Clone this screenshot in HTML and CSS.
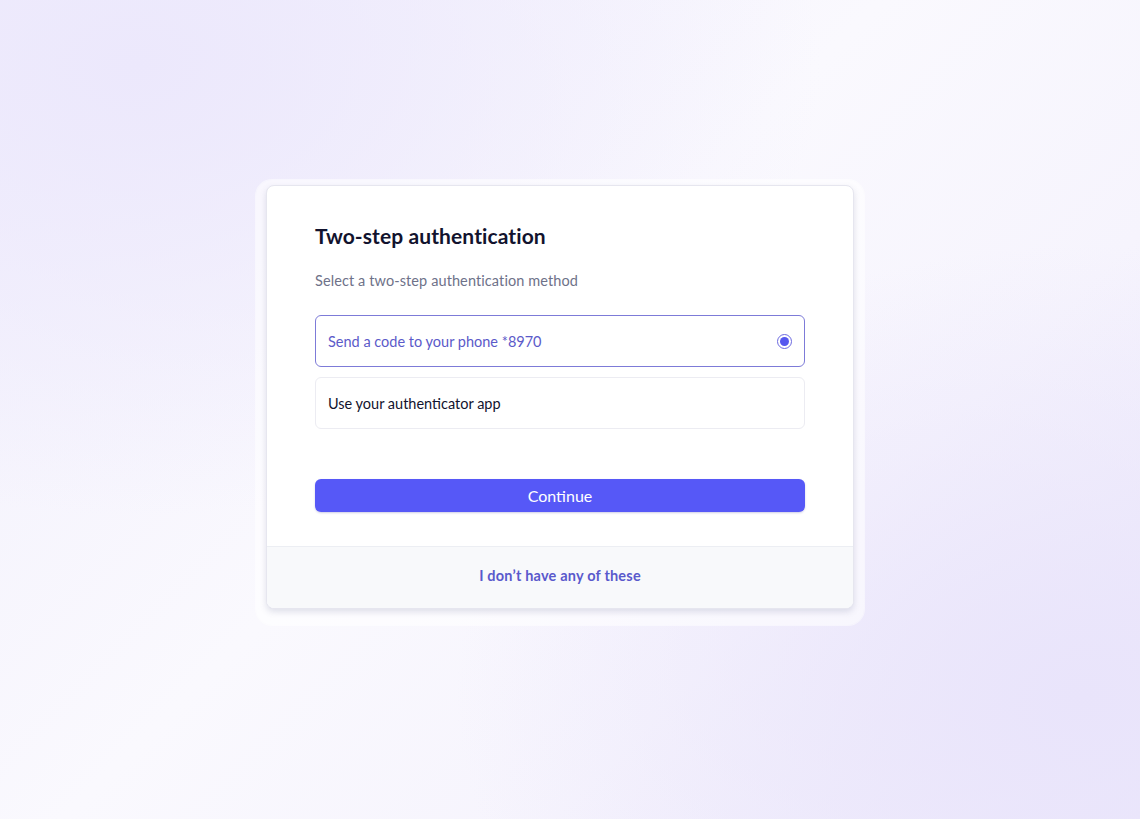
FILE: index.html
```html
<!DOCTYPE html>
<html lang="en">
<head>
<meta charset="utf-8">
<title>Two-step authentication</title>
<link rel="stylesheet" href="styles.css">
</head>
<body>
<main class="page">
  <div class="halo">
    <section class="card">
      <div class="card-body">
        <h1 class="title">Two-step authentication</h1>
        <p class="subtitle">Select a two-step authentication method</p>
        <div class="options">
          <label class="option option--selected">
            <span class="option-text">Send a code to your phone *8970</span>
            <span class="radio"><span class="radio-dot"></span></span>
          </label>
          <label class="option">
            <span class="option-text">Use your authenticator app</span>
          </label>
        </div>
        <button class="btn-primary" type="button">Continue</button>
      </div>
      <footer class="card-footer">
        <a class="footer-link" href="#">I don’t have any of these</a>
      </footer>
    </section>
  </div>
</main>
</body>
</html>
```
FILE: styles.css
```css
* { box-sizing: border-box; }
html, body { margin: 0; height: 100%; }
body {
  font-family: "Lato", "Inter", "Liberation Sans", sans-serif;
  background:
    radial-gradient(ellipse 60% 55% at 12% 8%, #ece8fc 0%, rgba(236,232,252,0) 100%),
    radial-gradient(ellipse 55% 55% at 95% 85%, #e9e4fb 0%, rgba(233,228,251,0) 100%),
    linear-gradient(135deg, #f1effc 0%, #faf9fe 45%, #f6f4fd 70%, #ece8fb 100%);
}
.page {
  width: 1140px;
  height: 819px;
  display: flex;
  justify-content: center;
  padding-top: 180px;
  padding-right: 20px;
}
.halo {
  align-self: flex-start;
  padding: 5px 10px 16px 10px;
  border-radius: 16px;
  background: rgba(255,255,255,0.6);
  box-shadow: 0 0 0 1px rgba(255,255,255,0.5);
}
.card {
  width: 588px;
  background: #fff;
  border: 1px solid #e6e6ef;
  border-radius: 8px;
  box-shadow: 0 3px 6px rgba(90, 95, 140, 0.18);
  overflow: hidden;
}
.card-body {
  padding: 36px 48px 34px 48px;
  display: flex;
  flex-direction: column;
}
.title {
  margin: 0;
  font-size: 21px;
  line-height: 28px;
  font-weight: 700;
  color: #12132e;
  letter-spacing: 0.1px;
}
.subtitle {
  margin: 21px 0 0 0;
  font-size: 14.5px;
  line-height: 20px;
  color: #6e7289;
  letter-spacing: 0.1px;
}
.options {
  margin-top: 24px;
  display: flex;
  flex-direction: column;
  gap: 10px;
}
.option {
  height: 52px;
  border: 1px solid #ececf2;
  border-radius: 6px;
  display: flex;
  align-items: center;
  justify-content: space-between;
  padding: 0 12px;
  font-size: 14.5px;
  color: #12132e;
}
.option--selected {
  border-color: #7d7bd8;
  color: #5b5ac9;
}
.radio {
  width: 15px;
  height: 15px;
  border-radius: 50%;
  border: 1.5px solid #6c6ae0;
  display: flex;
  align-items: center;
  justify-content: center;
}
.radio-dot {
  width: 9px;
  height: 9px;
  border-radius: 50%;
  background: #5557ef;
}
.btn-primary {
  margin-top: 50px;
  height: 33px;
  border: none;
  border-radius: 6px;
  background: #5658f7;
  color: #fff;
  font-family: inherit;
  font-size: 16px;
  box-shadow: 0 1px 2px rgba(60, 60, 160, 0.25);
}
.card-footer {
  height: 62px;
  border-top: 1px solid #eceef3;
  background: #f8f9fb;
  display: flex;
  align-items: center;
  justify-content: center;
  padding-bottom: 4px;
}
.footer-link {
  font-size: 14.5px;
  font-weight: 700;
  color: #5a59cc;
  text-decoration: none;
  letter-spacing: 0.2px;
}
```
